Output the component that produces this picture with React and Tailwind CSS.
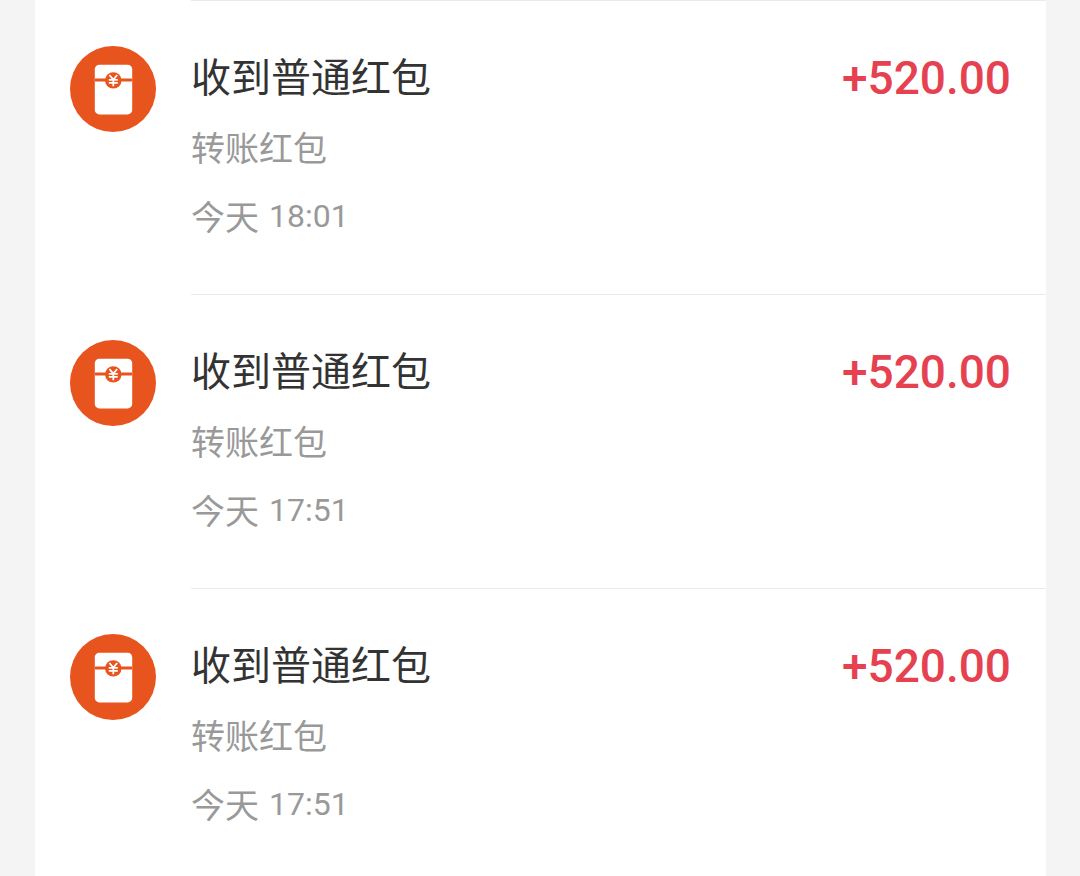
const RECORDS = [
  { id: 1, title: "收到普通红包", type: "转账红包", day: "今天", time: "18:01", amount: "+520.00" },
  { id: 2, title: "收到普通红包", type: "转账红包", day: "今天", time: "17:51", amount: "+520.00" },
  { id: 3, title: "收到普通红包", type: "转账红包", day: "今天", time: "17:51", amount: "+520.00" }
];

function RedPacketIcon() {
  return (
    <svg viewBox="0 0 86 86" className="block size-[86px]" aria-hidden="true">
      <circle cx="43" cy="43" r="43" fill="#e8541e" />
      <rect x="24.8" y="18.8" width="37.4" height="49.6" rx="4.5" fill="#fff" />
      <path d="M25 34H62" stroke="#e8541e" strokeWidth="2.8" />
      <circle cx="43.3" cy="34.4" r="8.2" fill="#e8541e" />
      <path
        d="M39.4 29L43.3 33.6L47.2 29M43.3 33.6V40.2M38.8 33.8H47.8M38.8 36.8H47.8"
        fill="none"
        stroke="#fff"
        strokeWidth="1.7"
      />
    </svg>
  );
}

function RecordRow({ record }) {
  return (
    <li className="flex gap-[35px] pl-[35px]">
      <div className="shrink-0 pt-[46px]">
        <RedPacketIcon />
      </div>

      <div className="flex min-w-0 flex-1 items-start justify-between border-t border-[#ebebeb] pt-[47px] pr-[35px] pb-[54px]">
        <div className="flex flex-col gap-[21px]">
          <h2 className="text-[40px] leading-[54px] text-[#333333]">
            {record.title}
          </h2>
          <p className="text-[34px] leading-[48px] text-[#999999]">
            {record.type}
          </p>
          <p className="flex gap-[10px] text-[34px] leading-[48px] text-[#999999]">
            <span>{record.day}</span>
            <time className="font-['Roboto',sans-serif] text-[32px]">
              {record.time}
            </time>
          </p>
        </div>

        <span className="font-['Roboto',sans-serif] text-[46px] leading-[60px] font-medium text-[#e64150]">
          {record.amount}
        </span>
      </div>
    </li>
  );
}

export default function App() {
  return (
    <main className="min-h-screen bg-[#f4f4f4] pr-[34px] pl-[35px] font-['Noto_Sans_CJK_SC',sans-serif]">
      <ul className="min-h-screen bg-white">
        {RECORDS.map((record) => (
          <RecordRow key={record.id} record={record} />
        ))}
      </ul>
    </main>
  );
}
